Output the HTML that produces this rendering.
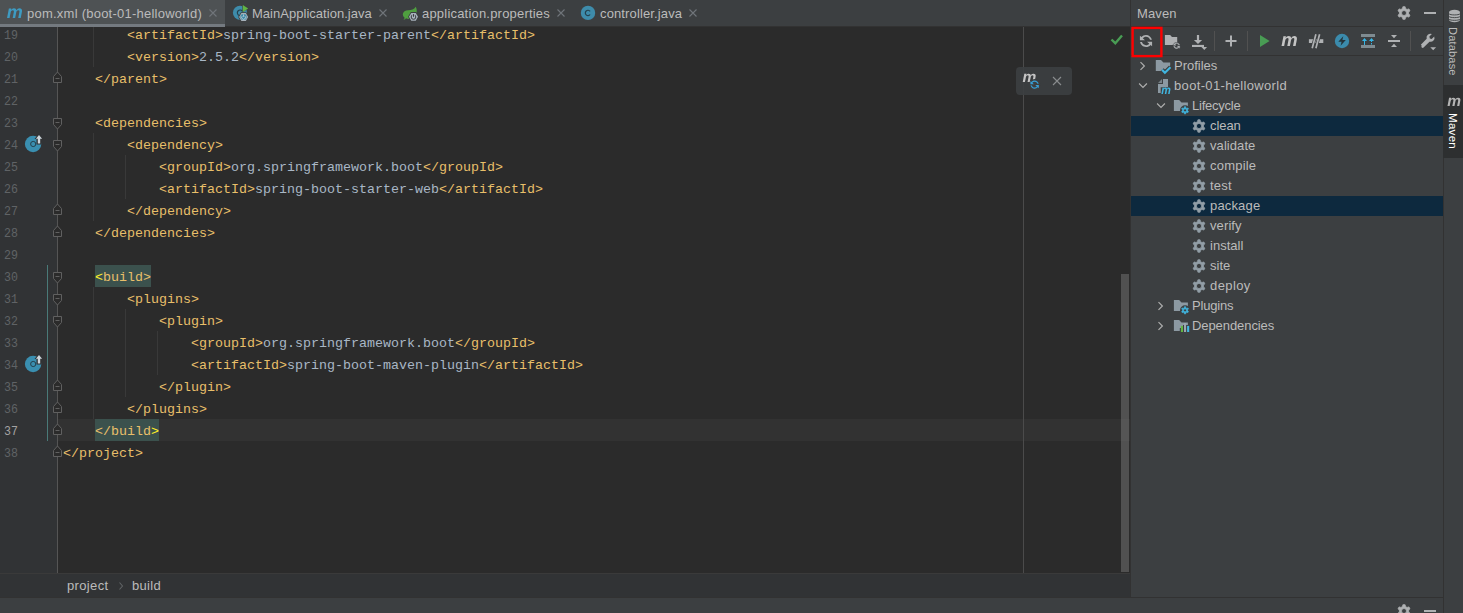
<!DOCTYPE html>
<html><head><meta charset="utf-8"><title>pom.xml</title>
<style>
html,body{margin:0;padding:0;}
body{width:1463px;height:613px;overflow:hidden;background:#3c3f41;position:relative;font-family:"Liberation Sans",sans-serif;font-size:12px;color:#bbbbbb;}
div,svg{box-sizing:border-box;}
svg text{text-rendering:geometricPrecision;}
svg.abs,svg.gic,svg.fold{will-change:transform;}
.abs{position:absolute;}
#tabs{position:absolute;left:0;top:0;width:1131px;height:27px;background:#3c3f41;border-bottom:1px solid #323232;}
.tab{position:absolute;top:0;height:27px;}
.tab .lbl{position:absolute;top:0;line-height:28px;font-size:13px;color:#bbbbbb;white-space:nowrap;}
#editor{position:absolute;left:0;top:27px;width:1130px;height:546px;background:#2b2b2b;overflow:hidden;}
#ed{position:absolute;left:0;top:-27px;width:1130px;height:613px;}
#gutter{position:absolute;left:0;top:0;width:57px;height:613px;background:#313335;}
#foldline{position:absolute;left:57px;top:0;width:1px;height:613px;background:#555555;}
.ln{position:absolute;left:4px;height:22px;line-height:22px;font-family:"Liberation Mono",monospace;font-size:13.33px;color:#606366;white-space:pre;padding-top:2px;transform:scaleX(0.87);transform-origin:0 0;}
.ln.cur{color:#a4a3a3;}
.cl{position:absolute;height:22px;line-height:22px;font-family:"Liberation Mono",monospace;font-size:13.33px;color:#a9b7c6;white-space:pre;padding-top:2px;}
.cl .t,.cl .h{color:#e8bf6a;}
.cl .x{color:#a9b7c6;}
.cl .y{color:#ffef28;}
.fold{position:absolute;left:52px;}
.guide{position:absolute;width:1px;background:#393939;}
.gic{position:absolute;left:24px;}
#curline{position:absolute;left:58px;top:419px;width:1072px;height:22px;background:#323232;}
.taghl{position:absolute;height:22px;background:#3b514d;}
#margin{position:absolute;left:1023px;top:0;width:1px;height:613px;background:#4b4b4b;}
#vcs{position:absolute;left:47px;top:265px;width:1px;height:176px;background:#4a7a78;}
#thumb{position:absolute;left:1121px;top:274px;width:8px;height:298px;background:rgba(128,128,128,0.45);}
#crumbs{position:absolute;left:0;top:573px;width:1130px;height:24px;background:#313335;border-top:1px solid #3a3a3a;}
#bottom{position:absolute;left:0;top:597px;width:1443px;height:16px;background:#3c3f41;border-top:1px solid #323232;}
#maven{position:absolute;left:1131px;top:0;width:312px;height:597px;background:#3c3f41;}
#mvborder{position:absolute;left:1130px;top:0;width:1px;height:597px;background:#323232;}
#strip{position:absolute;left:1443px;top:0;width:20px;height:613px;background:#3c3f41;border-left:1px solid #323232;}
.sel{position:absolute;left:1131px;width:312px;height:20px;background:#0d293e;}
.tl{position:absolute;height:20px;line-height:20px;font-size:13px;color:#bbbbbb;white-space:nowrap;}
.vt{position:absolute;white-space:nowrap;font-size:12px;color:#bbbbbb;transform-origin:0 0;transform:rotate(90deg);line-height:20px;height:20px;}
.sep{position:absolute;width:1px;height:20px;top:31px;background:#515151;}
</style></head>
<body>
<!-- editor -->
<div id="editor"><div id="ed">
<div id="gutter"></div>
<div id="curline"></div>
<div id="foldline"></div>
<div class="taghl" style="left:95px;top:265px;width:56px"></div>
<div class="taghl" style="left:95px;top:419px;width:64px"></div>
<div id="margin"></div>
<div id="vcs"></div>
<div class="guide" style="left:93px;top:23px;height:44px"></div><div class="guide" style="left:93px;top:133px;height:88px"></div><div class="guide" style="left:125px;top:155px;height:44px"></div><div class="guide" style="left:93px;top:287px;height:132px"></div><div class="guide" style="left:125px;top:309px;height:88px"></div><div class="guide" style="left:157px;top:331px;height:44px"></div>
<div class="ln" style="top:23px">19</div>
<div class="cl" style="top:23px;left:127px"><span class="t">&lt;artifactId&gt;</span><span class="x">spring-boot-starter-parent</span><span class="t">&lt;/artifactId&gt;</span></div>
<div class="ln" style="top:45px">20</div>
<div class="cl" style="top:45px;left:127px"><span class="t">&lt;version&gt;</span><span class="x">2.5.2</span><span class="t">&lt;/version&gt;</span></div>
<div class="ln" style="top:67px">21</div>
<div class="cl" style="top:67px;left:95px"><span class="t">&lt;/parent&gt;</span></div>
<div class="ln" style="top:89px">22</div>
<div class="ln" style="top:111px">23</div>
<div class="cl" style="top:111px;left:95px"><span class="t">&lt;dependencies&gt;</span></div>
<div class="ln" style="top:133px">24</div>
<div class="cl" style="top:133px;left:127px"><span class="t">&lt;dependency&gt;</span></div>
<div class="ln" style="top:155px">25</div>
<div class="cl" style="top:155px;left:159px"><span class="t">&lt;groupId&gt;</span><span class="x">org.springframework.boot</span><span class="t">&lt;/groupId&gt;</span></div>
<div class="ln" style="top:177px">26</div>
<div class="cl" style="top:177px;left:159px"><span class="t">&lt;artifactId&gt;</span><span class="x">spring-boot-starter-web</span><span class="t">&lt;/artifactId&gt;</span></div>
<div class="ln" style="top:199px">27</div>
<div class="cl" style="top:199px;left:127px"><span class="t">&lt;/dependency&gt;</span></div>
<div class="ln" style="top:221px">28</div>
<div class="cl" style="top:221px;left:95px"><span class="t">&lt;/dependencies&gt;</span></div>
<div class="ln" style="top:243px">29</div>
<div class="ln" style="top:265px">30</div>
<div class="cl" style="top:265px;left:95px"><span class="y">&lt;</span><span class="h">build&gt;</span></div>
<div class="ln" style="top:287px">31</div>
<div class="cl" style="top:287px;left:127px"><span class="t">&lt;plugins&gt;</span></div>
<div class="ln" style="top:309px">32</div>
<div class="cl" style="top:309px;left:159px"><span class="t">&lt;plugin&gt;</span></div>
<div class="ln" style="top:331px">33</div>
<div class="cl" style="top:331px;left:191px"><span class="t">&lt;groupId&gt;</span><span class="x">org.springframework.boot</span><span class="t">&lt;/groupId&gt;</span></div>
<div class="ln" style="top:353px">34</div>
<div class="cl" style="top:353px;left:191px"><span class="t">&lt;artifactId&gt;</span><span class="x">spring-boot-maven-plugin</span><span class="t">&lt;/artifactId&gt;</span></div>
<div class="ln" style="top:375px">35</div>
<div class="cl" style="top:375px;left:159px"><span class="t">&lt;/plugin&gt;</span></div>
<div class="ln" style="top:397px">36</div>
<div class="cl" style="top:397px;left:127px"><span class="t">&lt;/plugins&gt;</span></div>
<div class="ln cur" style="top:419px">37</div>
<div class="cl" style="top:419px;left:95px"><span class="h">&lt;/build</span><span class="y">&gt;</span></div>
<div class="ln" style="top:441px">38</div>
<div class="cl" style="top:441px;left:63px"><span class="t">&lt;/project&gt;</span></div>
<svg class="fold" style="top:71px" width="11" height="13" viewBox="0 0 11 13"><path d="M1.500 11.500h8v-6l-4-4.500l-4 4.500z" fill="#2b2b2b" stroke="#606060"/><path d="M3.500 7.500h4" stroke="#606060"/></svg><svg class="fold" style="top:117px" width="11" height="13" viewBox="0 0 11 13"><path d="M1.500 1.500h8v6l-4 4.500l-4-4.500z" fill="#2b2b2b" stroke="#606060"/><path d="M3.500 5.500h4" stroke="#606060"/></svg><svg class="fold" style="top:139px" width="11" height="13" viewBox="0 0 11 13"><path d="M1.500 1.500h8v6l-4 4.500l-4-4.500z" fill="#2b2b2b" stroke="#606060"/><path d="M3.500 5.500h4" stroke="#606060"/></svg><svg class="fold" style="top:203px" width="11" height="13" viewBox="0 0 11 13"><path d="M1.500 11.500h8v-6l-4-4.500l-4 4.500z" fill="#2b2b2b" stroke="#606060"/><path d="M3.500 7.500h4" stroke="#606060"/></svg><svg class="fold" style="top:225px" width="11" height="13" viewBox="0 0 11 13"><path d="M1.500 11.500h8v-6l-4-4.500l-4 4.500z" fill="#2b2b2b" stroke="#606060"/><path d="M3.500 7.500h4" stroke="#606060"/></svg><svg class="fold" style="top:271px" width="11" height="13" viewBox="0 0 11 13"><path d="M1.500 1.500h8v6l-4 4.500l-4-4.500z" fill="#2b2b2b" stroke="#606060"/><path d="M3.500 5.500h4" stroke="#606060"/></svg><svg class="fold" style="top:293px" width="11" height="13" viewBox="0 0 11 13"><path d="M1.500 1.500h8v6l-4 4.500l-4-4.500z" fill="#2b2b2b" stroke="#606060"/><path d="M3.500 5.500h4" stroke="#606060"/></svg><svg class="fold" style="top:315px" width="11" height="13" viewBox="0 0 11 13"><path d="M1.500 1.500h8v6l-4 4.500l-4-4.500z" fill="#2b2b2b" stroke="#606060"/><path d="M3.500 5.500h4" stroke="#606060"/></svg><svg class="fold" style="top:379px" width="11" height="13" viewBox="0 0 11 13"><path d="M1.500 11.500h8v-6l-4-4.500l-4 4.500z" fill="#2b2b2b" stroke="#606060"/><path d="M3.500 7.500h4" stroke="#606060"/></svg><svg class="fold" style="top:401px" width="11" height="13" viewBox="0 0 11 13"><path d="M1.500 11.500h8v-6l-4-4.500l-4 4.500z" fill="#2b2b2b" stroke="#606060"/><path d="M3.500 7.500h4" stroke="#606060"/></svg><svg class="fold" style="top:423px" width="11" height="13" viewBox="0 0 11 13"><path d="M1.500 11.500h8v-6l-4-4.500l-4 4.500z" fill="#2b2b2b" stroke="#606060"/><path d="M3.500 7.500h4" stroke="#606060"/></svg><svg class="fold" style="top:445px" width="11" height="13" viewBox="0 0 11 13"><path d="M1.500 11.500h8v-6l-4-4.500l-4 4.500z" fill="#2b2b2b" stroke="#606060"/><path d="M3.500 7.500h4" stroke="#606060"/></svg>
<svg class="gic" style="top:134px" width="20" height="20" viewBox="0 0 20 20"><circle cx="9.100" cy="10" r="8.200" fill="#3a8fb0"/><circle cx="9.200" cy="10" r="2.600" fill="none" stroke="#25414d" stroke-width="1"/><path d="M15 -0.500l4.500 5.500h-2v5.400h-5v-5.400h-2z" fill="#313335"/><path d="M15 1l3.100 3.700h-1.900v4.700h-2.400v-4.700h-1.900z" fill="#ced6dc"/></svg><svg class="gic" style="top:354px" width="20" height="20" viewBox="0 0 20 20"><circle cx="9.100" cy="10" r="8.200" fill="#3a8fb0"/><circle cx="9.200" cy="10" r="2.600" fill="none" stroke="#25414d" stroke-width="1"/><path d="M15 -0.500l4.500 5.500h-2v5.400h-5v-5.400h-2z" fill="#313335"/><path d="M15 1l3.100 3.700h-1.900v4.700h-2.400v-4.700h-1.900z" fill="#ced6dc"/></svg>
<div id="thumb"></div>
<!-- check mark -->
<svg class="abs" style="left:1109px;top:32px" width="16" height="16" viewBox="0 0 16 16"><path d="M2.500 7.500l3.800 3.700 6.700-7.700" fill="none" stroke="#499c54" stroke-width="2.400"/></svg>
<!-- floating popup -->
<div class="abs" style="left:1016px;top:67px;width:56px;height:28px;background:rgba(60,63,65,0.92);border-radius:4px;"></div>
<svg class="abs" style="left:1021px;top:70px" width="22" height="22" viewBox="0 0 22 22"><text x="1.600" y="11.600" font-family="Liberation Sans, sans-serif" font-style="italic" font-weight="bold" font-size="15.500" fill="#c4c4c4">m</text><circle cx="13.600" cy="14.600" r="5.600" fill="#3c3f41"/><g transform="translate(8.100,9.100) scale(0.69)"><path d="M12.575 11.885C11.474 13.182 9.832 14.004 7.999 14.004C5.039 14.004 2.580 11.862 2.088 9.043L3.948 9.108C4.434 10.890 6.064 12.200 8 12.200C9.301 12.200 10.465 11.608 11.235 10.679L9.050 8.712H14.090V13.250ZM3.428 4.117C4.528 2.825 6.168 2.004 7.999 2.004C10.919 2.004 13.351 4.090 13.888 6.853L12.023 6.788C11.502 5.059 9.898 3.800 8 3.800C6.699 3.800 5.535 4.392 4.765 5.321L6.955 7.293H1.915V2.755Z" fill="#389fd6"/></g></svg>
<svg class="abs" style="left:1052px;top:76px" width="10" height="10" viewBox="0 0 10 10"><path d="M1 1l8 8M9 1l-8 8" stroke="#8a8d8f" stroke-width="1.100"/></svg>
</div></div>

<!-- tabs -->
<div id="tabs">
 <div class="tab" style="left:0;width:225px;background:#4e5254;"><div class="abs" style="left:0;top:24px;width:225px;height:3px;background:#747a80;"></div>
  <svg class="abs" style="left:5px;top:5px" width="19" height="16" viewBox="0 0 19 16"><text x="1.800" y="13" font-family="Liberation Sans, sans-serif" font-style="italic" font-weight="bold" font-size="18" fill="#3e9bc2">m</text></svg>
  <div class="lbl fit" style="left:27px;letter-spacing:0.238px">pom.xml (boot-01-helloworld)</div>
  <svg class="abs" style="left:208px;top:8px" width="10" height="10" viewBox="0 0 10 10"><path d="M1.500 1.500l7 7M8.500 1.500l-7 7" stroke="#70757a" stroke-width="1.100"/></svg>
 </div>
 <div class="tab" style="left:225px;width:171px;">
  <svg class="abs" style="left:5px;top:2px" width="22" height="22" viewBox="0 0 22 22"><circle cx="10" cy="10.800" r="7.100" fill="#3e8cab"/><path d="M12.300 9a2.800 2.800 0 100 3.600" fill="none" stroke="#24424f" stroke-width="1.200"/><path d="M12.300 2.200v8l6.500-4z" fill="#3c3f41"/><path d="M12.800 2.900l5.400 3.500-5.400 3.500z" fill="#62b543"/><polygon points="19.00,15.00 16.30,19.68 10.90,19.68 8.20,15.00 10.90,10.32 16.30,10.32" fill="#3c3f41"/><polygon points="18.10,15.00 15.85,18.90 11.35,18.90 9.10,15.00 11.35,11.10 15.85,11.10" fill="#a6b1ba"/><circle cx="13.6" cy="15" r="3.100" fill="#3e8cab"/><path d="M12.10 14.30a1.900 1.900 0 103 0" fill="none" stroke="#c5ced6" stroke-width="0.900"/><path d="M13.6 12.40v2.400" stroke="#c5ced6" stroke-width="0.900"/></svg>
  <div class="lbl fit" style="left:27px;letter-spacing:0.028px">MainApplication.java</div>
  <svg class="abs" style="left:153px;top:8px" width="10" height="10" viewBox="0 0 10 10"><path d="M1.500 1.500l7 7M8.500 1.500l-7 7" stroke="#70757a" stroke-width="1.100"/></svg>
 </div>
 <div class="tab" style="left:396px;width:178px;">
  <svg class="abs" style="left:0px;top:2px" width="24" height="22" viewBox="0 0 24 22"><path d="M19.700 4.800C21.500 8 21 12.500 18.500 14.800C16 17.200 12.200 17.400 10 16.300C9.600 17 8.800 17.600 7.400 18C8.200 17.200 8.500 16.500 8.600 15.800C6.300 14 6.200 11.200 8.200 9.600C10.500 7.800 14 8.600 16.500 7.600C17.900 7 19 6 19.700 4.800Z" fill="#4f9f3f"/><polygon points="22.90,14.80 20.20,19.48 14.80,19.48 12.10,14.80 14.80,10.12 20.20,10.12" fill="#3c3f41"/><polygon points="22.00,14.80 19.75,18.70 15.25,18.70 13.00,14.80 15.25,10.90 19.75,10.90" fill="#a6b1ba"/><circle cx="17.5" cy="15.0" r="2.300" fill="none" stroke="#3c3f41" stroke-width="1"/><path d="M17.5 11.80v2.800" stroke="#b0bbc4" stroke-width="2.400"/><path d="M17.5 12.10v2.700" stroke="#3c3f41" stroke-width="1"/></svg>
  <div class="lbl fit" style="left:26px;letter-spacing:0.201px">application.properties</div>
  <svg class="abs" style="left:160px;top:8px" width="10" height="10" viewBox="0 0 10 10"><path d="M1.500 1.500l7 7M8.500 1.500l-7 7" stroke="#70757a" stroke-width="1.100"/></svg>
 </div>
 <div class="tab" style="left:574px;width:140px;">
  <svg class="abs" style="left:6px;top:5px" width="16" height="16" viewBox="0 0 16 16"><circle cx="8" cy="7.900" r="7.200" fill="#3e8cab"/><path d="M10.100 6.300a2.650 2.650 0 100 3.200" fill="none" stroke="#24424f" stroke-width="1.200"/></svg>
  <div class="lbl fit" style="left:26px;letter-spacing:0.132px">controller.java</div>
  <svg class="abs" style="left:114px;top:8px" width="10" height="10" viewBox="0 0 10 10"><path d="M1.500 1.500l7 7M8.500 1.500l-7 7" stroke="#70757a" stroke-width="1.100"/></svg>
 </div>
</div>

<!-- breadcrumbs -->
<div id="crumbs">
 <div class="abs fit" style="left:67px;top:0;line-height:24px;font-size:13px;color:#bbbbbb;letter-spacing:0.353px">project</div>
 <svg class="abs" style="left:117px;top:7px" width="8" height="10" viewBox="0 0 8 10"><path d="M2.500 1.500l3 3.500-3 3.500" fill="none" stroke="#606365" stroke-width="1.100"/></svg>
 <div class="abs fit" style="left:132px;top:0;line-height:24px;font-size:13px;color:#bbbbbb;letter-spacing:0.306px">build</div>
</div>
<div id="bottom"></div>

<!-- maven panel -->
<div id="mvborder"></div>
<div id="maven"></div>
<div class="abs fit" style="left:1137px;top:0;line-height:28px;font-size:13px;color:#bbbbbb;letter-spacing:0.134px">Maven</div>
<div class="abs" style="left:1131px;top:26px;width:312px;height:1px;background:#323232;"></div>
<div class="abs" style="left:1131px;top:55px;width:312px;height:1px;background:#323232;"></div>
<svg class="abs" style="left:1128px;top:23px" width="40" height="40" viewBox="1128 23 40 40"><rect x="1132.600" y="27.900" width="28.800" height="28.200" fill="none" stroke="#ff0000" stroke-width="2.400"/></svg>
<svg class="abs" style="left:1138px;top:33px" width="16" height="16" viewBox="0 0 16 16"><path d="M12.575 11.885C11.474 13.182 9.832 14.004 7.999 14.004C5.039 14.004 2.580 11.862 2.088 9.043L3.948 9.108C4.434 10.890 6.064 12.200 8 12.200C9.301 12.200 10.465 11.608 11.235 10.679L9.050 8.712H14.090V13.250ZM3.428 4.117C4.528 2.825 6.168 2.004 7.999 2.004C10.919 2.004 13.351 4.090 13.888 6.853L12.023 6.788C11.502 5.059 9.898 3.800 8 3.800C6.699 3.800 5.535 4.392 4.765 5.321L6.955 7.293H1.915V2.755Z" fill="#afb1b3"/></svg>
<svg class="abs" style="left:1164px;top:33px" width="18" height="18" viewBox="0 0 18 18"><path d="M0.900 2h5.200l1.900 2h5.200v5.200a4.300 4.300 0 00-4.600 2.900h-7.700z" fill="#afb1b3"/><g transform="translate(8.650,8.650) scale(0.5)"><path d="M12.575 11.885C11.474 13.182 9.832 14.004 7.999 14.004C5.039 14.004 2.580 11.862 2.088 9.043L3.948 9.108C4.434 10.890 6.064 12.200 8 12.200C9.301 12.200 10.465 11.608 11.235 10.679L9.050 8.712H14.090V13.250ZM3.428 4.117C4.528 2.825 6.168 2.004 7.999 2.004C10.919 2.004 13.351 4.090 13.888 6.853L12.023 6.788C11.502 5.059 9.898 3.800 8 3.800C6.699 3.800 5.535 4.392 4.765 5.321L6.955 7.293H1.915V2.755Z" fill="#afb1b3" stroke="#afb1b3" stroke-width="0.600"/></g></svg>
<svg class="abs" style="left:1190px;top:33px" width="18" height="18" viewBox="0 0 18 18"><path d="M6.900 2h2.200v5h3l-4.100 3.900-4.100-3.900h3z" fill="#afb1b3"/><rect x="2" y="11.900" width="12" height="2.100" fill="#afb1b3"/><path d="M11.400 14h5.700l-2.850 3z" fill="#afb1b3"/></svg>
<div class="sep" style="left:1214px"></div>
<svg class="abs" style="left:1225px;top:35px" width="12" height="12" viewBox="0 0 12 12"><path d="M5 0.500h2v4.500h4.500v2h-4.500v4.500h-2v-4.500h-4.500v-2h4.500z" fill="#afb1b3"/></svg>
<div class="sep" style="left:1247px"></div>
<svg class="abs" style="left:1258px;top:33px" width="16" height="16" viewBox="0 0 16 16"><path d="M2 2l9.600 6-9.600 6z" fill="#499c54"/></svg>
<svg class="abs" style="left:1280px;top:32px" width="20" height="18" viewBox="0 0 20 18"><text x="1.300" y="14" font-family="Liberation Sans, sans-serif" font-style="italic" font-weight="bold" font-size="18.500" fill="#c4c4c4">m</text></svg>
<svg class="abs" style="left:1308px;top:33px" width="16" height="16" viewBox="0 0 16 16"><rect x="0.900" y="6.200" width="14.400" height="3.800" fill="#afb1b3"/><path d="M7.900 1.300l-3.700 13.900M11.600 1.300l-3.700 13.900" stroke="#3c3f41" stroke-width="3.100" fill="none"/><path d="M7.900 1.300l-3.700 13.900M11.600 1.300l-3.700 13.900" stroke="#afb1b3" stroke-width="1.700" fill="none"/></svg>
<svg class="abs" style="left:1334px;top:33px" width="16" height="16" viewBox="0 0 16 16"><circle cx="8" cy="8" r="7.200" fill="#3b8bac"/><path d="M9.300 3.200l-5 5.600h3.300l-1 4 5.200-5.800h-3.400z" fill="#25343b"/></svg>
<svg class="abs" style="left:1360px;top:33px" width="16" height="16" viewBox="0 0 16 16"><rect x="1" y="1" width="14" height="3" fill="#7f8b91"/><rect x="1" y="12" width="14" height="3" fill="#7f8b91"/><path d="M4.500 5l2.500 3h-2v4h-1v-4h-2z" fill="#35b5e5"/><path d="M11.500 5l2.500 3h-2v1h-1v-1h-2z" fill="#35b5e5"/><rect x="11" y="10" width="1" height="1.500" fill="#35b5e5"/></svg>
<svg class="abs" style="left:1386px;top:33px" width="16" height="16" viewBox="0 0 16 16"><rect x="2" y="7" width="12" height="2" fill="#afb1b3"/><path d="M5 2h6l-3 3.200z" fill="#afb1b3"/><path d="M5 14h6l-3-3.200z" fill="#afb1b3"/></svg>
<div class="sep" style="left:1410px"></div>
<svg class="abs" style="left:1419px;top:32px" width="20" height="20" viewBox="0 0 20 20"><path d="M2.500 14.200l6.300-6.300a4.200 4.200 0 015.600-5.100l-2.700 2.700.5 2 2 .5 2.700-2.700a4.200 4.200 0 01-5.100 5.600l-6.300 6.300a1.400 1.400 0 01-2-2z" fill="#afb1b3" transform="translate(-0.5,-0.5) scale(0.93)"/><path d="M11.300 15.300h5.800l-2.900 2.900z" fill="#afb1b3"/></svg>
<svg class="abs" style="left:1396px;top:5px" width="16" height="16" viewBox="0 0 16 16"><path fill="#afb1b3" fill-rule="evenodd" stroke="#afb1b3" stroke-width="0.8" stroke-linejoin="round" d="M9.53 3.56L9.11 1.70L6.89 1.70L6.47 3.56L4.92 4.45L3.10 3.89L1.99 5.81L3.39 7.10L3.39 8.90L1.99 10.19L3.10 12.11L4.92 11.55L6.47 12.44L6.89 14.30L9.11 14.30L9.53 12.44L11.08 11.55L12.90 12.11L14.01 10.19L12.61 8.90L12.61 7.10L14.01 5.81L12.90 3.89L11.08 4.45ZM10.50 8.00A2.5 2.5 0 1 0 5.50 8.00A2.5 2.5 0 1 0 10.50 8.00Z"/></svg>
<div class="abs" style="left:1424px;top:12px;width:12px;height:2px;background:#afb1b3"></div>
<svg class="abs" style="left:1396px;top:603px" width="16" height="16" viewBox="0 0 16 16"><path fill="#afb1b3" fill-rule="evenodd" stroke="#afb1b3" stroke-width="0.8" stroke-linejoin="round" d="M9.53 3.56L9.11 1.70L6.89 1.70L6.47 3.56L4.92 4.45L3.10 3.89L1.99 5.81L3.39 7.10L3.39 8.90L1.99 10.19L3.10 12.11L4.92 11.55L6.47 12.44L6.89 14.30L9.11 14.30L9.53 12.44L11.08 11.55L12.90 12.11L14.01 10.19L12.61 8.90L12.61 7.10L14.01 5.81L12.90 3.89L11.08 4.45ZM10.50 8.00A2.5 2.5 0 1 0 5.50 8.00A2.5 2.5 0 1 0 10.50 8.00Z"/></svg>
<div class="abs" style="left:1424px;top:610px;width:12px;height:2px;background:#afb1b3"></div>
<svg class="abs" style="left:1139px;top:60px" width="8" height="12" viewBox="0 0 8 12"><path d="M1.500 2.100l3.900 3.900-3.900 3.900" fill="none" stroke="#adadad" stroke-width="1.200"/></svg>
<svg class="abs" style="left:1155px;top:58px" width="18" height="18" viewBox="0 0 18 18"><path d="M0.800 2h5.200l2.400 2.500h6.800v3l-6.500 5.500h-7.900z" fill="#8c99a2"/><path d="M7 11.700l2.900 3.100 5.600-5.500" stroke="#3c3f41" stroke-width="4.600" fill="none"/><path d="M7 11.700l2.900 3.100 5.600-5.500" stroke="#40b6e0" stroke-width="2.100" fill="none"/></svg>
<div class="tl fit" style="left:1174px;top:56px;letter-spacing:-0.007px">Profiles</div>
<svg class="abs" style="left:1137px;top:82px" width="12" height="8" viewBox="0 0 12 8"><path d="M2.100 1.500l3.900 3.900 3.900-3.900" fill="none" stroke="#adadad" stroke-width="1.200"/></svg>
<svg class="abs" style="left:1155px;top:78px" width="18" height="18" viewBox="0 0 18 18"><path d="M8 1v5H3v9h2.700V9.300h7.300V1z" fill="#8c99a2"/><path d="M7 1L3 5h4z" fill="#8c99a2" opacity="0.75"/><text x="6.300" y="15.900" textLength="9.600" lengthAdjust="spacingAndGlyphs" font-family="Liberation Sans, sans-serif" font-style="italic" font-weight="bold" font-size="12" fill="#40b6e0">m</text></svg>
<div class="tl fit" style="left:1174px;top:76px;letter-spacing:0.341px">boot-01-helloworld</div>
<svg class="abs" style="left:1155px;top:102px" width="12" height="8" viewBox="0 0 12 8"><path d="M2.100 1.500l3.900 3.900 3.900-3.900" fill="none" stroke="#adadad" stroke-width="1.200"/></svg>
<svg class="abs" style="left:1173px;top:98px" width="18" height="18" viewBox="0 0 18 18"><path d="M0.900 2h5.200l2.400 2.500h6.400v8.500h-14z" fill="#8c99a2"/><circle cx="12.050" cy="12.300" r="5" fill="#3c3f41"/><path fill="#40b6e0" fill-rule="evenodd" stroke="#40b6e0" stroke-width="0.7" stroke-linejoin="round" d="M12.86 9.94L12.68 8.75L11.42 8.75L11.24 9.94L10.41 10.41L9.29 9.99L8.67 11.07L9.60 11.82L9.60 12.78L8.67 13.53L9.29 14.61L10.41 14.19L11.24 14.66L11.42 15.85L12.68 15.85L12.86 14.66L13.69 14.19L14.81 14.61L15.43 13.53L14.50 12.78L14.50 11.82L15.43 11.07L14.81 9.99L13.69 10.41ZM13.55 12.30A1.5 1.5 0 1 0 10.55 12.30A1.5 1.5 0 1 0 13.55 12.30Z"/></svg>
<div class="tl fit" style="left:1192px;top:96px;letter-spacing:-0.231px">Lifecycle</div>
<div class="sel" style="top:116px"></div>
<svg class="abs" style="left:1191px;top:118px" width="16" height="16" viewBox="0 0 16 16"><path fill="#929ea7" fill-rule="evenodd" stroke="#929ea7" stroke-width="0.8" stroke-linejoin="round" d="M9.50 3.65L9.09 1.80L6.91 1.80L6.50 3.65L4.98 4.53L3.17 3.95L2.08 5.85L3.48 7.12L3.48 8.88L2.08 10.15L3.17 12.05L4.98 11.47L6.50 12.35L6.91 14.20L9.09 14.20L9.50 12.35L11.02 11.47L12.83 12.05L13.92 10.15L12.52 8.88L12.52 7.12L13.92 5.85L12.83 3.95L11.02 4.53ZM10.60 8.00A2.6 2.6 0 1 0 5.40 8.00A2.6 2.6 0 1 0 10.60 8.00Z"/></svg>
<div class="tl fit" style="left:1210px;top:116px;letter-spacing:-0.076px">clean</div>
<svg class="abs" style="left:1191px;top:138px" width="16" height="16" viewBox="0 0 16 16"><path fill="#929ea7" fill-rule="evenodd" stroke="#929ea7" stroke-width="0.8" stroke-linejoin="round" d="M9.50 3.65L9.09 1.80L6.91 1.80L6.50 3.65L4.98 4.53L3.17 3.95L2.08 5.85L3.48 7.12L3.48 8.88L2.08 10.15L3.17 12.05L4.98 11.47L6.50 12.35L6.91 14.20L9.09 14.20L9.50 12.35L11.02 11.47L12.83 12.05L13.92 10.15L12.52 8.88L12.52 7.12L13.92 5.85L12.83 3.95L11.02 4.53ZM10.60 8.00A2.6 2.6 0 1 0 5.40 8.00A2.6 2.6 0 1 0 10.60 8.00Z"/></svg>
<div class="tl fit" style="left:1210px;top:136px;letter-spacing:0.073px">validate</div>
<svg class="abs" style="left:1191px;top:158px" width="16" height="16" viewBox="0 0 16 16"><path fill="#929ea7" fill-rule="evenodd" stroke="#929ea7" stroke-width="0.8" stroke-linejoin="round" d="M9.50 3.65L9.09 1.80L6.91 1.80L6.50 3.65L4.98 4.53L3.17 3.95L2.08 5.85L3.48 7.12L3.48 8.88L2.08 10.15L3.17 12.05L4.98 11.47L6.50 12.35L6.91 14.20L9.09 14.20L9.50 12.35L11.02 11.47L12.83 12.05L13.92 10.15L12.52 8.88L12.52 7.12L13.92 5.85L12.83 3.95L11.02 4.53ZM10.60 8.00A2.6 2.6 0 1 0 5.40 8.00A2.6 2.6 0 1 0 10.60 8.00Z"/></svg>
<div class="tl fit" style="left:1210px;top:156px;letter-spacing:0.215px">compile</div>
<svg class="abs" style="left:1191px;top:178px" width="16" height="16" viewBox="0 0 16 16"><path fill="#929ea7" fill-rule="evenodd" stroke="#929ea7" stroke-width="0.8" stroke-linejoin="round" d="M9.50 3.65L9.09 1.80L6.91 1.80L6.50 3.65L4.98 4.53L3.17 3.95L2.08 5.85L3.48 7.12L3.48 8.88L2.08 10.15L3.17 12.05L4.98 11.47L6.50 12.35L6.91 14.20L9.09 14.20L9.50 12.35L11.02 11.47L12.83 12.05L13.92 10.15L12.52 8.88L12.52 7.12L13.92 5.85L12.83 3.95L11.02 4.53ZM10.60 8.00A2.6 2.6 0 1 0 5.40 8.00A2.6 2.6 0 1 0 10.60 8.00Z"/></svg>
<div class="tl fit" style="left:1210px;top:176px;letter-spacing:0.183px">test</div>
<div class="sel" style="top:196px"></div>
<svg class="abs" style="left:1191px;top:198px" width="16" height="16" viewBox="0 0 16 16"><path fill="#929ea7" fill-rule="evenodd" stroke="#929ea7" stroke-width="0.8" stroke-linejoin="round" d="M9.50 3.65L9.09 1.80L6.91 1.80L6.50 3.65L4.98 4.53L3.17 3.95L2.08 5.85L3.48 7.12L3.48 8.88L2.08 10.15L3.17 12.05L4.98 11.47L6.50 12.35L6.91 14.20L9.09 14.20L9.50 12.35L11.02 11.47L12.83 12.05L13.92 10.15L12.52 8.88L12.52 7.12L13.92 5.85L12.83 3.95L11.02 4.53ZM10.60 8.00A2.6 2.6 0 1 0 5.40 8.00A2.6 2.6 0 1 0 10.60 8.00Z"/></svg>
<div class="tl fit" style="left:1210px;top:196px;letter-spacing:0.163px">package</div>
<svg class="abs" style="left:1191px;top:218px" width="16" height="16" viewBox="0 0 16 16"><path fill="#929ea7" fill-rule="evenodd" stroke="#929ea7" stroke-width="0.8" stroke-linejoin="round" d="M9.50 3.65L9.09 1.80L6.91 1.80L6.50 3.65L4.98 4.53L3.17 3.95L2.08 5.85L3.48 7.12L3.48 8.88L2.08 10.15L3.17 12.05L4.98 11.47L6.50 12.35L6.91 14.20L9.09 14.20L9.50 12.35L11.02 11.47L12.83 12.05L13.92 10.15L12.52 8.88L12.52 7.12L13.92 5.85L12.83 3.95L11.02 4.53ZM10.60 8.00A2.6 2.6 0 1 0 5.40 8.00A2.6 2.6 0 1 0 10.60 8.00Z"/></svg>
<div class="tl fit" style="left:1210px;top:216px;letter-spacing:0.106px">verify</div>
<svg class="abs" style="left:1191px;top:238px" width="16" height="16" viewBox="0 0 16 16"><path fill="#929ea7" fill-rule="evenodd" stroke="#929ea7" stroke-width="0.8" stroke-linejoin="round" d="M9.50 3.65L9.09 1.80L6.91 1.80L6.50 3.65L4.98 4.53L3.17 3.95L2.08 5.85L3.48 7.12L3.48 8.88L2.08 10.15L3.17 12.05L4.98 11.47L6.50 12.35L6.91 14.20L9.09 14.20L9.50 12.35L11.02 11.47L12.83 12.05L13.92 10.15L12.52 8.88L12.52 7.12L13.92 5.85L12.83 3.95L11.02 4.53ZM10.60 8.00A2.6 2.6 0 1 0 5.40 8.00A2.6 2.6 0 1 0 10.60 8.00Z"/></svg>
<div class="tl fit" style="left:1210px;top:236px;letter-spacing:0.007px">install</div>
<svg class="abs" style="left:1191px;top:258px" width="16" height="16" viewBox="0 0 16 16"><path fill="#929ea7" fill-rule="evenodd" stroke="#929ea7" stroke-width="0.8" stroke-linejoin="round" d="M9.50 3.65L9.09 1.80L6.91 1.80L6.50 3.65L4.98 4.53L3.17 3.95L2.08 5.85L3.48 7.12L3.48 8.88L2.08 10.15L3.17 12.05L4.98 11.47L6.50 12.35L6.91 14.20L9.09 14.20L9.50 12.35L11.02 11.47L12.83 12.05L13.92 10.15L12.52 8.88L12.52 7.12L13.92 5.85L12.83 3.95L11.02 4.53ZM10.60 8.00A2.6 2.6 0 1 0 5.40 8.00A2.6 2.6 0 1 0 10.60 8.00Z"/></svg>
<div class="tl fit" style="left:1210px;top:256px;letter-spacing:0.016px">site</div>
<svg class="abs" style="left:1191px;top:278px" width="16" height="16" viewBox="0 0 16 16"><path fill="#929ea7" fill-rule="evenodd" stroke="#929ea7" stroke-width="0.8" stroke-linejoin="round" d="M9.50 3.65L9.09 1.80L6.91 1.80L6.50 3.65L4.98 4.53L3.17 3.95L2.08 5.85L3.48 7.12L3.48 8.88L2.08 10.15L3.17 12.05L4.98 11.47L6.50 12.35L6.91 14.20L9.09 14.20L9.50 12.35L11.02 11.47L12.83 12.05L13.92 10.15L12.52 8.88L12.52 7.12L13.92 5.85L12.83 3.95L11.02 4.53ZM10.60 8.00A2.6 2.6 0 1 0 5.40 8.00A2.6 2.6 0 1 0 10.60 8.00Z"/></svg>
<div class="tl fit" style="left:1210px;top:276px;letter-spacing:0.398px">deploy</div>
<svg class="abs" style="left:1157px;top:300px" width="8" height="12" viewBox="0 0 8 12"><path d="M1.500 2.100l3.900 3.900-3.900 3.900" fill="none" stroke="#adadad" stroke-width="1.200"/></svg>
<svg class="abs" style="left:1173px;top:298px" width="18" height="18" viewBox="0 0 18 18"><path d="M0.900 2h5.200l2.400 2.500h6.400v8.500h-14z" fill="#8c99a2"/><circle cx="12.050" cy="12.300" r="5" fill="#3c3f41"/><path fill="#40b6e0" fill-rule="evenodd" stroke="#40b6e0" stroke-width="0.7" stroke-linejoin="round" d="M12.86 9.94L12.68 8.75L11.42 8.75L11.24 9.94L10.41 10.41L9.29 9.99L8.67 11.07L9.60 11.82L9.60 12.78L8.67 13.53L9.29 14.61L10.41 14.19L11.24 14.66L11.42 15.85L12.68 15.85L12.86 14.66L13.69 14.19L14.81 14.61L15.43 13.53L14.50 12.78L14.50 11.82L15.43 11.07L14.81 9.99L13.69 10.41ZM13.55 12.30A1.5 1.5 0 1 0 10.55 12.30A1.5 1.5 0 1 0 13.55 12.30Z"/></svg>
<div class="tl fit" style="left:1192px;top:296px;letter-spacing:-0.177px">Plugins</div>
<svg class="abs" style="left:1157px;top:320px" width="8" height="12" viewBox="0 0 8 12"><path d="M1.500 2.100l3.900 3.900-3.900 3.900" fill="none" stroke="#adadad" stroke-width="1.200"/></svg>
<svg class="abs" style="left:1173px;top:318px" width="18" height="18" viewBox="0 0 18 18"><path d="M0.900 2h5.200l2.400 2.500h6.400v2.400h-4.900v3h-3.200v3.100h-5.900z" fill="#8c99a2"/><rect x="7.900" y="7.900" width="2.100" height="6.100" fill="#62b543"/><rect x="11" y="5" width="2.100" height="9" fill="#9aa7b0"/><rect x="14.100" y="7.900" width="2.100" height="6.100" fill="#40b6e0"/></svg>
<div class="tl fit" style="left:1192px;top:316px;letter-spacing:-0.077px">Dependencies</div>
<!-- right strip -->
<div id="strip"></div>
<div class="abs" style="left:1443px;top:85px;width:20px;height:73px;background:#2d2f30;"></div>
<svg class="abs" style="left:1446px;top:8px" width="16" height="16" viewBox="0 0 16 16"><path d="M3 4.300c0-1.400 2.500-2.500 5.500-2.500s5.500 1.100 5.500 2.500v7.400c0 1.400-2.500 2.500-5.500 2.500s-5.500-1.100-5.500-2.500z" fill="#afb1b3"/><path d="M3 5.800c1.200 1.500 9.800 1.500 11 0M3 8.500c1.200 1.500 9.800 1.500 11 0M3 11.200c1.200 1.500 9.800 1.500 11 0" fill="none" stroke="#3c3f41" stroke-width="0.900"/></svg>
<div class="vt" style="left:1462.500px;top:27px;font-size:11px;letter-spacing:0.2px;">Database</div>
<svg class="abs" style="left:1446px;top:94px" width="17" height="16" viewBox="0 0 17 16"><text x="1.300" y="12.200" font-family="Liberation Sans, sans-serif" font-style="italic" font-weight="bold" font-size="15.500" fill="#b4b4b4">m</text></svg>
<div class="vt" style="left:1462.500px;top:113px;font-size:11.500px;letter-spacing:0.3px;color:#ffffff;">Maven</div>
</body></html>
